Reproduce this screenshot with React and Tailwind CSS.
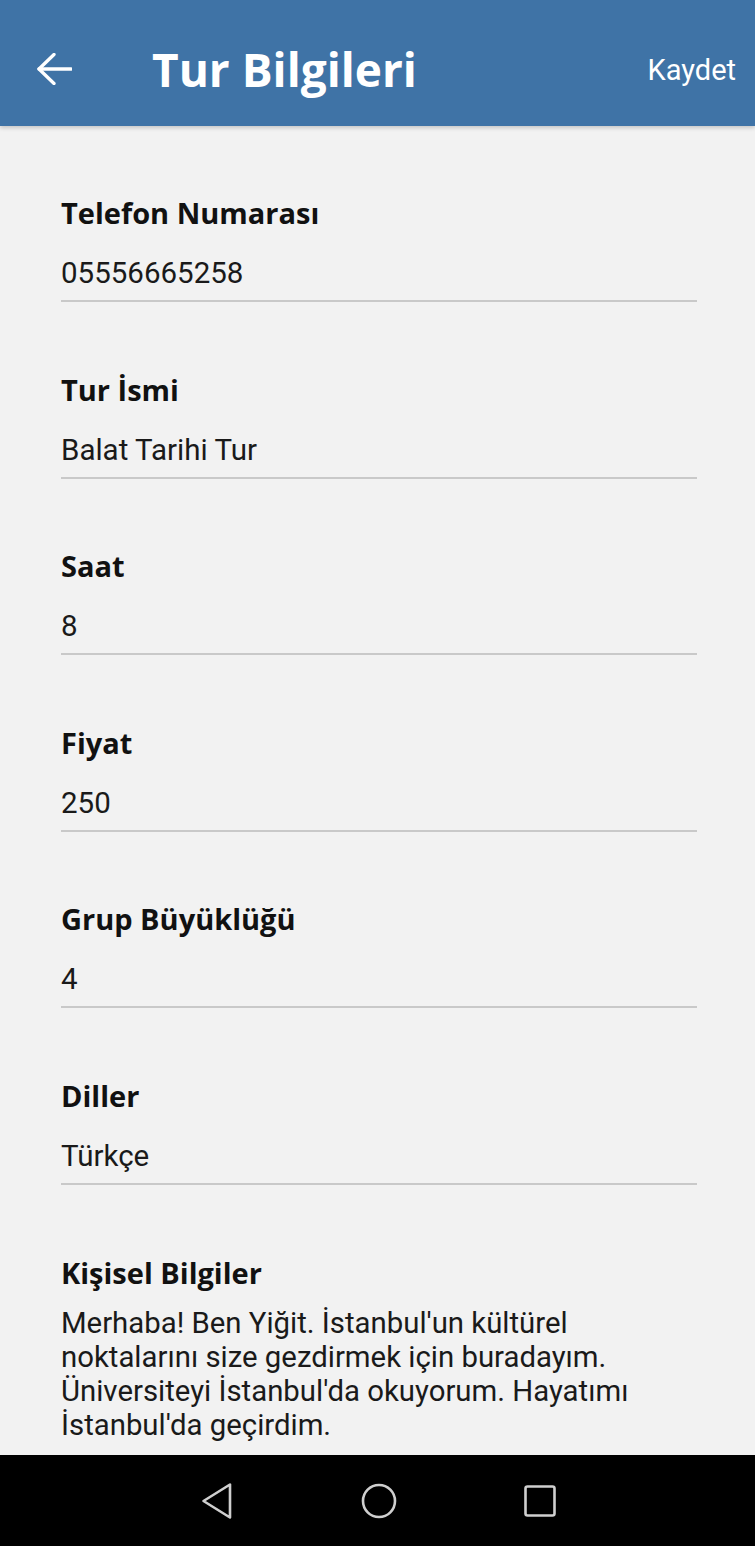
import React from 'react'

const fields = [
  { label: 'Telefon Numarası', value: '05556665258' },
  { label: 'Tur İsmi', value: 'Balat Tarihi Tur' },
  { label: 'Saat', value: '8' },
  { label: 'Fiyat', value: '250' },
  { label: 'Grup Büyüklüğü', value: '4' },
  { label: 'Diller', value: 'Türkçe' },
]

const openSans = "font-['Open_Sans',sans-serif]"
const roboto = "font-['Roboto',sans-serif]"

function Field({ label, value }) {
  return (
    <div className="mb-[67.6px]">
      <div className={`${openSans} font-bold text-[29px] leading-[40px] text-[#111]`}>{label}</div>
      <div className={`${roboto} mt-[22px] text-[29.5px] leading-[36px] text-[#1a1a1a] pb-[9px] border-b-2 border-[#c9c9c9]`}>
        {value}
      </div>
    </div>
  )
}

export default function App() {
  return (
    <div className="flex flex-col h-[1546px] w-[755px] bg-[#f2f2f2] overflow-hidden">
      {/* üst bar */}
      <header className="relative z-10 flex items-center h-[126px] pt-[12px] shrink-0 bg-[#3f73a6] shadow-[0_2px_4px_rgba(0,0,0,0.18)]">
        <button className="ml-[36px] w-[36px] h-[32px] flex items-center">
          <svg width="36" height="32" viewBox="0 0 36 32" fill="none" stroke="#fff" strokeWidth="3.3" strokeLinecap="round" strokeLinejoin="round">
            <path d="M3 16H35" />
            <path d="M18 1.5L3 16L18 30.5" />
          </svg>
        </button>
        <h1 className={`${openSans} ml-[80px] font-bold text-[46px] leading-none text-white`}>Tur Bilgileri</h1>
        <span className={`${roboto} ml-auto mr-[19px] mt-[3px] text-[29px] text-white`}>Kaydet</span>
      </header>

      <main className="flex-1 overflow-hidden pt-[67px] pl-[61px] pr-[58px]">
        {fields.map((f) => (
          <Field key={f.label} {...f} />
        ))}
        <div>
          <div className={`${openSans} font-bold text-[29px] leading-[40px] text-[#111]`}>Kişisel Bilgiler</div>
          <p className={`${roboto} mt-[13px] max-w-[600px] text-[29.35px] leading-[34.3px] text-[#1a1a1a]`}>
            Merhaba! Ben Yiğit. İstanbul'un kültürel noktalarını size gezdirmek için buradayım. Üniversiteyi İstanbul'da okuyorum. Hayatımı İstanbul'da geçirdim.
          </p>
        </div>
      </main>

      {/* android navigasyon */}
      <nav className="h-[91px] shrink-0 bg-black flex items-center justify-center gap-[127px]">
        <svg width="34" height="38" viewBox="0 0 34 38" fill="none" stroke="#cfcfcf" strokeWidth="2.6" strokeLinejoin="round">
          <path d="M30 2.5V35.5L3.5 19Z" />
        </svg>
        <svg width="36" height="36" viewBox="0 0 36 36" fill="none" stroke="#cfcfcf" strokeWidth="2.6">
          <circle cx="18" cy="18" r="16" />
        </svg>
        <svg width="32" height="32" viewBox="0 0 32 32" fill="none" stroke="#cfcfcf" strokeWidth="2.6">
          <rect x="1.5" y="1.5" width="29" height="29" rx="2" />
        </svg>
      </nav>
    </div>
  )
}
